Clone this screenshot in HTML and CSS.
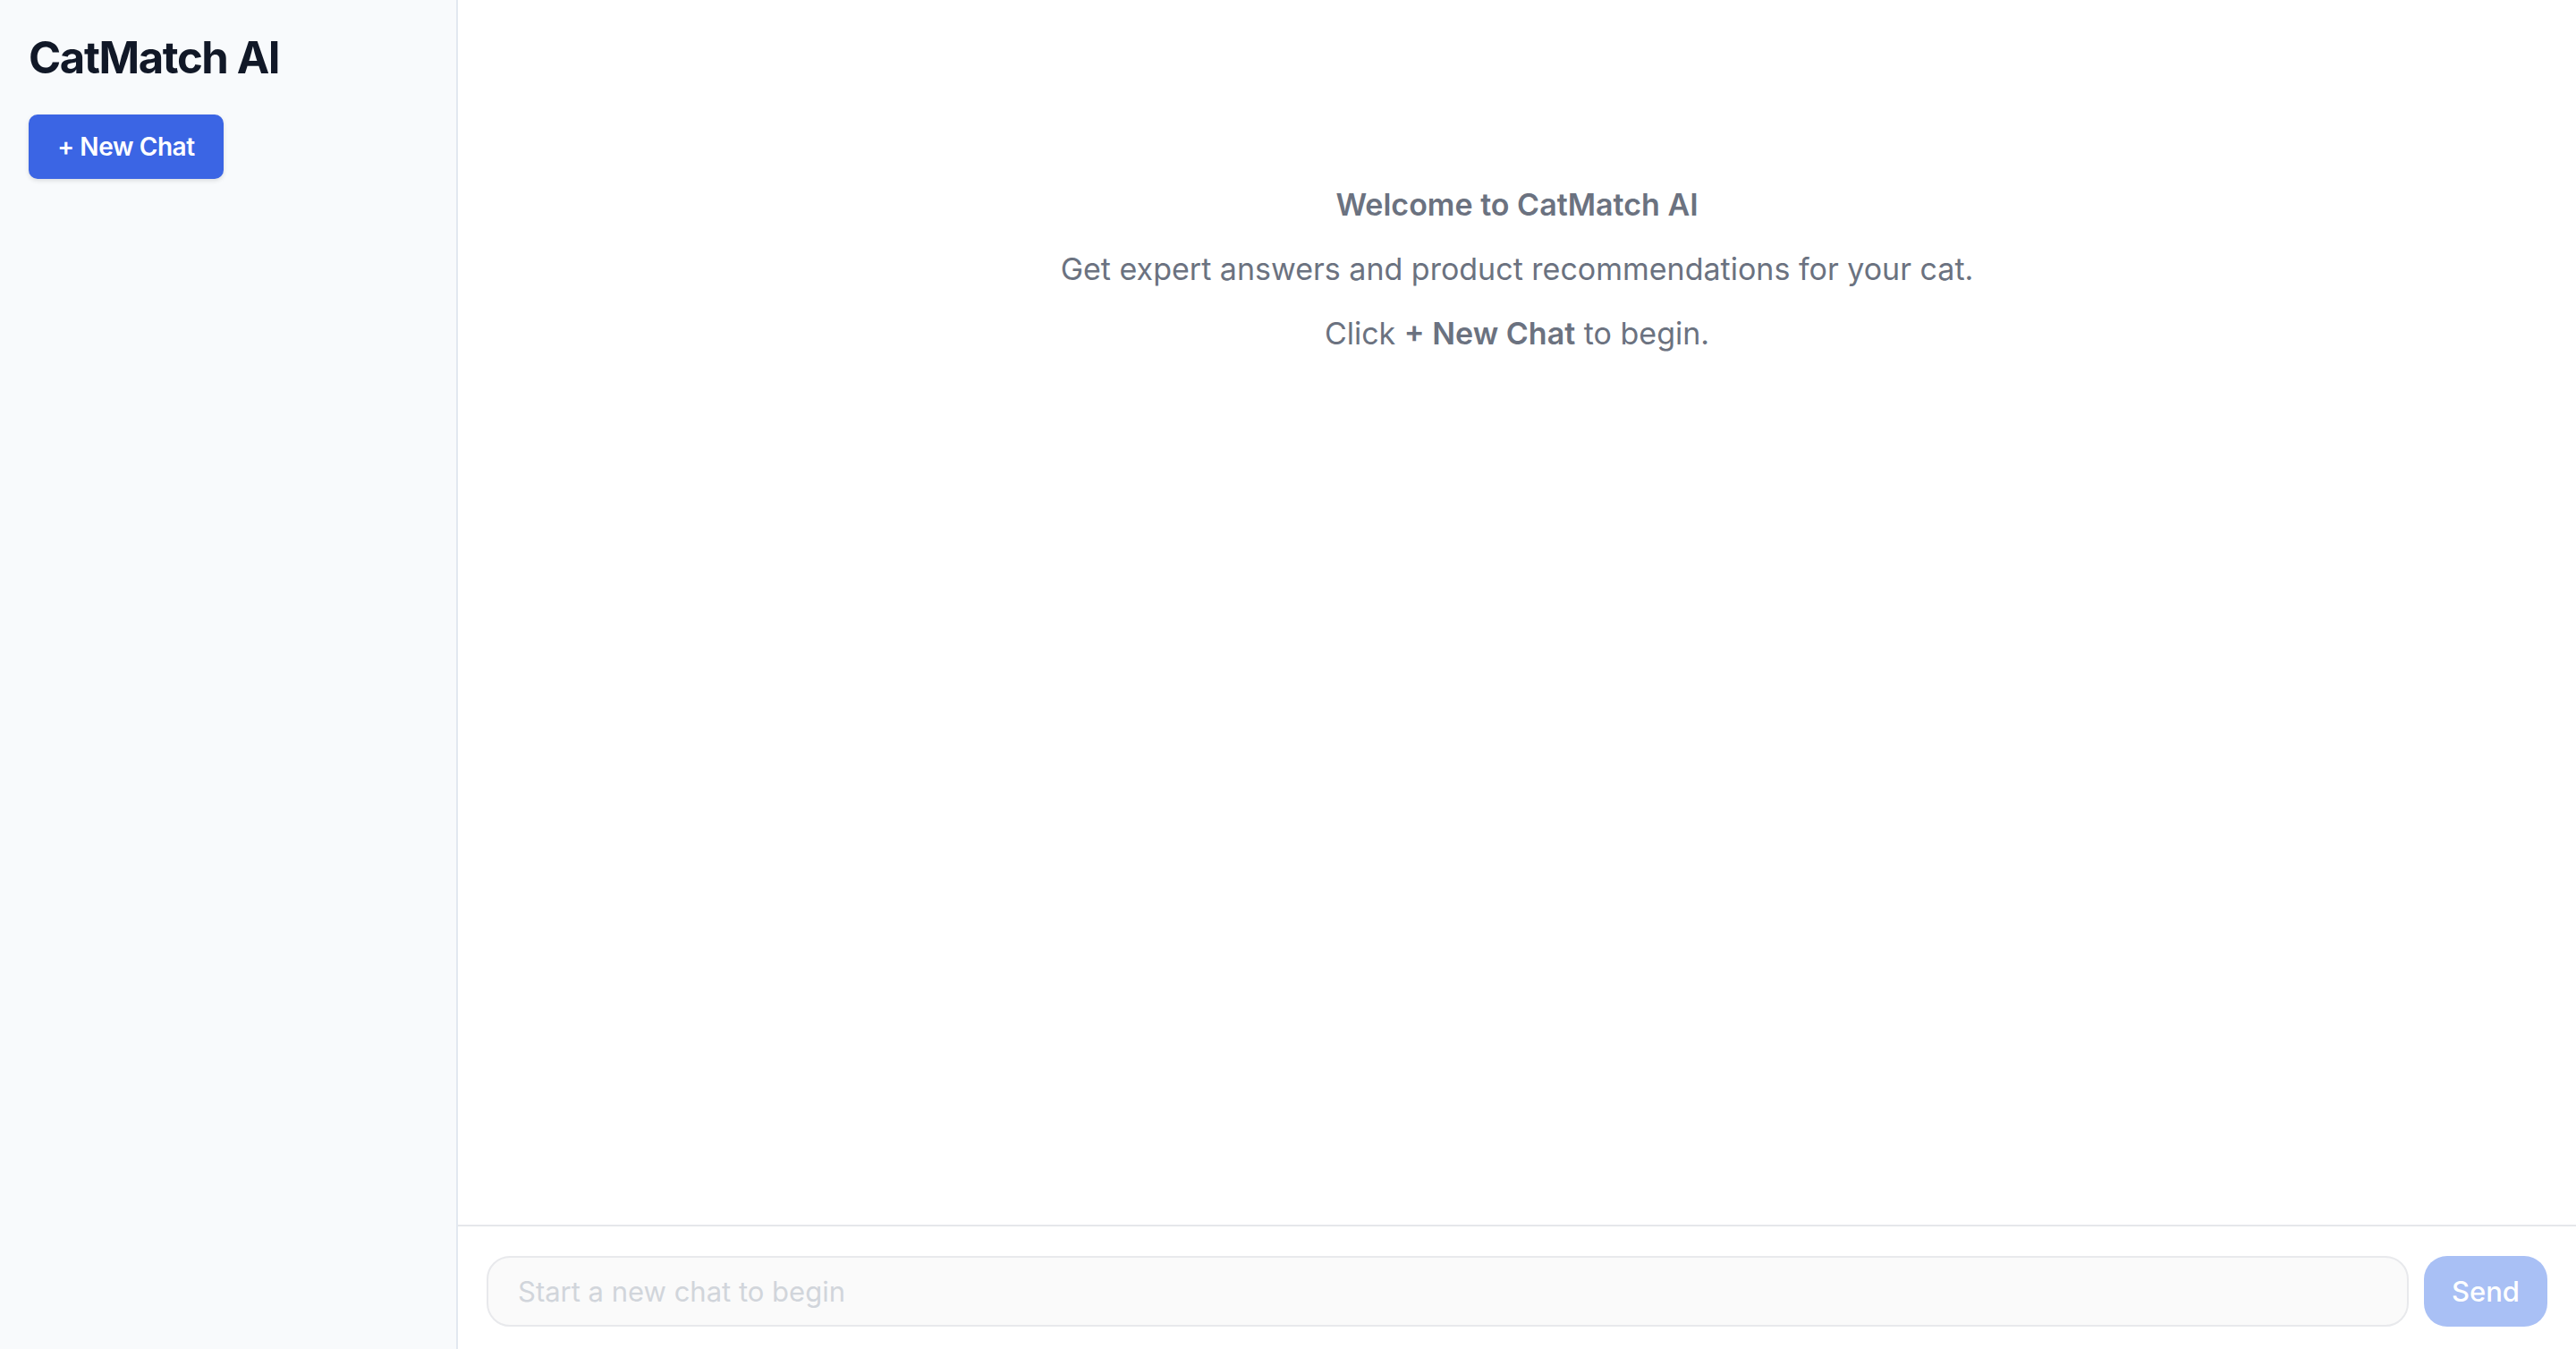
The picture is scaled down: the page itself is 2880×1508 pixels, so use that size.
FILE: index.html
```html
<!DOCTYPE html>
<html>
<head>
    <title>CatMatch AI</title>
    <link rel="stylesheet" href="styles.css">
</head>
<body>
    <div class="app">
        <aside class="sidebar">
            <h1 class="brand">CatMatch AI</h1>
            <button class="new-chat">+ New Chat</button>
        </aside>

        <main class="chat">
            <div class="messages">
                <div class="welcome">
                    <p class="welcome-title">Welcome to CatMatch AI</p>
                    <p>Get expert answers and product recommendations for your cat.</p>
                    <p>Click <strong>+ New Chat</strong> to begin.</p>
                </div>
            </div>
            <form class="composer">
                <input type="text" class="composer-input" placeholder="Start a new chat to begin" disabled>
                <button type="submit" class="send" disabled>Send</button>
            </form>
        </main>
    </div>
</body>
</html>
```

FILE: styles.css
```css
* { box-sizing: border-box; }

html, body {
    margin: 0;
    height: 100%;
}

body {
    font-family: Inter, "Noto Sans", sans-serif;
    color: #111827;
    background: #fff;
}

.app {
    display: flex;
    height: 100vh;
}

.sidebar {
    width: 512px;
    flex-shrink: 0;
    background: #f8fafc;
    border-right: 2px solid #e2e8f0;
    padding: 34px 32px;
}

.brand {
    margin: 0;
    font-size: 49px;
    font-weight: 700;
    line-height: 62px;
    letter-spacing: -1.4px;
    color: #111827;
}

.new-chat {
    margin-top: 32px;
    width: 218px;
    height: 72px;
    border: none;
    border-radius: 10px;
    background: #3b65e4;
    color: #fff;
    font-family: inherit;
    font-size: 28px;
    font-weight: 600;
    letter-spacing: -0.4px;
    box-shadow: 0 2px 5px rgba(0, 0, 0, 0.12);
    cursor: pointer;
}

.chat {
    flex: 1;
    display: flex;
    flex-direction: column;
    min-width: 0;
}

.messages {
    flex: 1;
    padding-top: 207px;
}

.welcome {
    text-align: center;
    color: #6b7280;
    font-size: 34px;
    line-height: 44px;
}

.welcome p {
    margin: 0 0 28px;
}

.welcome-title,
.welcome strong {
    font-weight: 600;
}

.composer {
    display: flex;
    gap: 17px;
    padding: 33px 32px 25px;
    border-top: 2px solid #e5e7eb;
}

.composer-input {
    flex: 1;
    height: 79px;
    padding: 0 33px;
    border: 2px solid #e8e9ec;
    border-radius: 26px;
    background: #fafafa;
    font-family: inherit;
    font-size: 31px;
    outline: none;
}

.composer-input::placeholder {
    color: #d1d5db;
}

.send {
    width: 138px;
    height: 79px;
    border: none;
    border-radius: 26px;
    background: #a9c0f5;
    color: #fff;
    font-family: inherit;
    font-size: 31px;
    font-weight: 500;
}
```
